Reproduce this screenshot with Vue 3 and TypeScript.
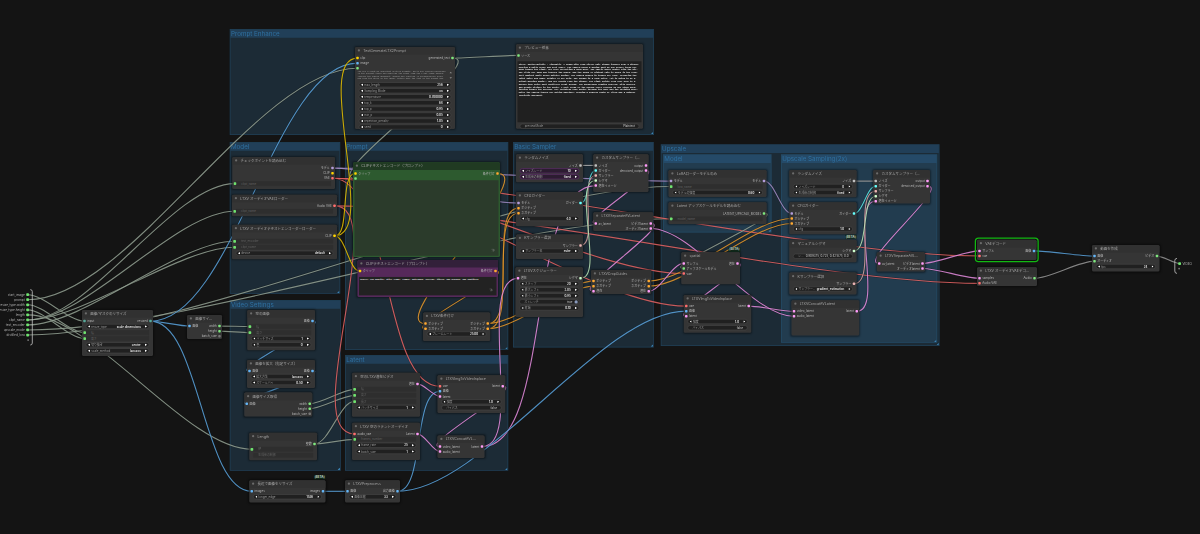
<script setup lang="ts">
type Slot = [label: string, kind: string]
interface Widget {
  name: string
  value?: string
  linked?: boolean
  bare?: boolean
  plain?: boolean
  toggle?: boolean
  seed?: boolean
}
interface Note {
  lines: string[]
  height: number
  lift: number
  look: string
}
interface GraphNode {
  id: string
  title: string
  box: [number, number, number, number]
  ins?: Slot[]
  outs?: Slot[]
  widgets?: Widget[]
  note?: Note
  tone?: string
  beta?: boolean
  selected?: boolean
}

const ZOOM = 4
const TITLE = 7.6
const ROW = 5.05
const PITCH = 6.05

const colors: Record<string, string> = {
  image: '#64b5f6', clip: '#ffd500', vae: '#ff6e6e', latent: '#ff9cf9', model: '#b39ddb',
  cond: '#ffa931', text: '#7fe87f', any: '#57a99a', noise: '#c0c0c0', guider: '#66ffff',
  sampler: '#ecb4b4', sigmas: '#cdffcd', grey: '#777777', wire: '#a3b3a3', audio: '#a8a8a8',
}

const groups = [
  { title: 'Prompt Enhance', box: [229.7, 29, 654, 135] },
  { title: 'Model', box: [229.7, 142, 340.3, 293.7] },
  { title: 'Prompt', box: [345, 142, 508.3, 350] },
  { title: 'Basic Sampler', box: [513, 142, 653.8, 347.6] },
  { title: 'Upscale', box: [660.8, 144.2, 939.6, 346] },
  { title: 'Model', box: [663, 154.3, 771.6, 232.6] },
  { title: 'Upscale Sampling(2x)', box: [781, 154.3, 937.3, 342.7] },
  { title: 'Video Settings', box: [229.7, 300, 340.7, 470.7] },
  { title: 'Latent', box: [345, 355, 508.3, 470.7] },
]

const num = (name: string, value: string): Widget => ({ name, value })
const linked = (name: string): Widget => ({ name, linked: true })
const pos: Slot = ['ポジティブ', 'cond']
const neg: Slot = ['ネガティブ', 'cond']
const samplerIns: Slot[] = [['ノイズ', 'noise'], ['ガイダー', 'guider'], ['サンプラー', 'sampler'], ['シグマ', 'sigmas'], ['潜在イメージ', 'latent']]
const samplerOuts: Slot[] = [['output', 'latent'], ['denoised_output', 'latent']]
const separateOuts: Slot[] = [['ビデオlatent', 'latent'], ['オーディオlatent', 'latent']]
const concatIns: Slot[] = [['video_latent', 'latent'], ['audio_latent', 'latent']]
const inplaceIns: Slot[] = [['vae', 'vae'], ['画像', 'image'], ['latent', 'latent']]
const inplaceWidgets: Widget[] = [num('強度', '1.0'), { name: 'バイパス', value: 'false', plain: true }]

const systemLines = [
  'You are a creative assistant writing prompts. Write one flowing paragraph',
  'in the present tense and describe the scene from the first frame onward,',
  'include the camera movement, sounds and lighting in chronological order',
  'and keep the style of the image. Return only the text of the prompt now.',
]
const previewLines = [
  'Style: photorealistic - cinematic. A woman with long silver hair stands indoors near a window,',
  'wearing a white dress and soft scarf. The camera holds a medium shot as she slowly turns her',
  'head toward the light, her eyes reflecting a warm glow. The fabric moves gently with the air.',
  'She lifts her hand and touches the glass, and the sound of distant rain is heard in the room.',
  'Soft ambient music plays quietly behind. The camera pushes in toward her face, revealing the',
  'faint smile and small details of her skin. She speaks in a calm voice, "It is going to be a',
  'bright morning again," and her breath fogs the window. The light shifts from cool blue to a',
  'golden tone while dust particles float around. The background remains blurred, with shelves',
  'and plants visible in the depth. A soft creak of the wooden floor follows as she steps back,',
  'turning toward the doorway. Her footsteps echo gently through the hall and the curtains move,',
  'while the camera tracks her motion smoothly, keeping a shallow depth of field and a natural',
  'realistic movement.',
]

const nodes: GraphNode[] = [
  { id: 'resize', title: '画像/マスクのリサイズ', box: [82, 310, 153, 356], ins: [['input', 'any']], outs: [['resized', 'any']],
    widgets: [num('resize_type', 'scale dimensions'), linked('幅'), linked('高さ'), num('切り抜き', 'center'), num('scale_method', 'lanczos')] },
  { id: 'size', title: '画像サイ…', box: [187, 315, 222, 339], ins: [['画像', 'image']], outs: [['width', 'text'], ['height', 'text'], ['batch_size', 'grey']] },
  { id: 'gen', title: 'TextGenerateLTX2Prompt', box: [355, 47, 455, 129], ins: [['clip', 'clip'], ['image', 'image'], ['', 'text']], outs: [['generated_text', 'text']],
    note: { lines: systemLines, height: 11.5, lift: 1.4, look: 'bare' },
    widgets: [num('max_length', '256'), num('Sampling Mode', 'on'), num('temperature', '0.700000'), num('top_k', '64'), num('top_p', '0.95'), num('min_p', '0.05'), num('repetition_penalty', '1.05'), num('seed', '0')] },
  { id: 'preview', title: 'プレビュー任意', box: [516, 44.3, 643, 128.7], ins: [['ソース', 'text']],
    note: { lines: previewLines, height: 61, lift: -3.4, look: 'bright' },
    widgets: [{ name: 'previewMode', value: 'Plaintext', plain: true }] },
  { id: 'ckpt', title: 'チェックポイントを読み込む', box: [232.3, 157, 335, 189], outs: [['モデル', 'model'], ['CLIP', 'clip'], ['VAE', 'vae']], widgets: [linked('ckpt_name')] },
  { id: 'avae', title: 'LTXV オーディオVAEローダー', box: [232, 194.7, 337, 216.3], outs: [['Audio VAE', 'vae']], widgets: [linked('ckpt_name')] },
  { id: 'tenc', title: 'LTXV オーディオテキストエンコーダーローダー', box: [232, 224.7, 337, 259.3], outs: [['CLIP', 'clip']], widgets: [linked('text_encoder'), linked('ckpt_name'), num('device', 'default')] },
  { id: 'green', title: 'CLIPテキストエンコード（プロンプト）', box: [353, 162.3, 500, 257], tone: 'green', ins: [['クリップ', 'clip'], ['', 'text']], outs: [['条件付け', 'cond']],
    note: { lines: [], height: 75.5, lift: 0.8, look: 'moss' } },
  { id: 'purple', title: 'CLIPテキストエンコード（プロンプト）', box: [357.5, 260, 498, 297], tone: 'purple', ins: [['クリップ', 'clip']], outs: [['条件付け', 'cond']],
    note: { lines: ['blurry, low quality, still frame, frames, watermark, overlay, titles, has blurbox, has subtitles'], height: 18.6, lift: -3.2, look: 'dark' } },
  { id: 'cond', title: 'LTXV条件付け', box: [423, 312.5, 490.3, 341], ins: [pos, neg], outs: [pos, neg], widgets: [num('フレームレート', '25.00')] },
  { id: 'noise', title: 'ランダムノイズ', box: [516, 154.3, 583, 182.3], outs: [['ノイズ', 'noise']], widgets: [{ name: 'ノイズシード', value: '10', seed: true }, { name: '生成後の制御', value: 'fixed', seed: true }] },
  { id: 'cfg', title: 'CFGガイダー', box: [516, 192, 583, 226.3], ins: [['モデル', 'model'], pos, neg], outs: [['ガイダー', 'guider']], widgets: [num('cfg', '4.0')] },
  { id: 'ks', title: 'Kサンプラー選択', box: [516, 234.5, 583, 259], outs: [['サンプラー', 'sampler']], widgets: [num('サンプラー名', 'euler')] },
  { id: 'sched', title: 'LTXVスケジューラー', box: [515.6, 267.2, 583, 317], ins: [['潜在', 'latent']], outs: [['シグマ', 'sigmas']],
    widgets: [num('ステップ', '20'), num('最大シフト', '2.05'), num('最小シフト', '0.95'), { name: 'ストレッチ', value: 'true', toggle: true }, num('終端', '0.10')] },
  { id: 'cs', title: 'カスタムサンプラー（…', box: [593.3, 154.3, 648.6, 192], ins: samplerIns, outs: samplerOuts },
  { id: 'sep', title: 'LTXVSeparateAVLatent', box: [593.3, 212.3, 653.3, 231], ins: [['av_latent', 'latent']], outs: separateOuts },
  { id: 'crop', title: 'LTXVCropGuides', box: [591, 270, 651.2, 294], ins: [pos, neg, ['潜在', 'latent']], outs: [pos, neg, ['潜在', 'latent']] },
  { id: 'lora', title: 'LoRAローダーモデルのみ', box: [668.6, 170, 766.6, 197], ins: [['モデル', 'model']], outs: [['モデル', 'model']], widgets: [linked('lora_name'), num('モデルの強度', '0.60')] },
  { id: 'upm', title: 'Latent アップスケールモデルを読み込む', box: [668.6, 202.3, 766.6, 224], outs: [['LATENT_UPSCALE_MODEL', 'text']], widgets: [linked('model_name')] },
  { id: 'spatial', title: 'spatial', box: [681.3, 252.3, 740, 284.2], beta: true, ins: [['サンプル', 'latent'], ['アップスケールモデル', 'text'], ['vae', 'vae']], outs: [['潜在', 'latent']] },
  { id: 'inp2', title: 'LTXVImgToVideoInplace', box: [683.7, 295, 751.3, 332.7], ins: inplaceIns, outs: [['latent', 'latent']], widgets: inplaceWidgets },
  { id: 'noise2', title: 'ランダムノイズ', box: [789.3, 170, 856.5, 197.3], outs: [['ノイズ', 'noise']], widgets: [num('ノイズシード', '0'), num('生成後の制御', 'fixed')] },
  { id: 'cfg2', title: 'CFGガイダー', box: [789.3, 202.3, 856.5, 234.3], ins: [['モデル', 'model'], pos, neg], outs: [['ガイダー', 'guider']], widgets: [num('cfg', '1.0')] },
  { id: 'manual', title: 'マニュアルシグマ', box: [789.3, 239.8, 856.5, 262.2], beta: true, outs: [['シグマ', 'sigmas']], widgets: [{ name: 'シ…', value: '0.909375, 0.725, 0.421875, 0.0', plain: true }] },
  { id: 'ks2', title: 'Kサンプラー選択', box: [789.3, 272.6, 856.5, 294.6], outs: [['サンプラー', 'sampler']], widgets: [num('サンプラー…', 'gradient_estimation')] },
  { id: 'cat2', title: 'LTXVConcatAVLatent', box: [791.4, 300.2, 859.2, 335.4], ins: concatIns, outs: [['latent', 'latent']] },
  { id: 'cs2', title: 'カスタムサンプラー（…', box: [873.3, 170, 930, 203.6], ins: samplerIns, outs: samplerOuts },
  { id: 'sep2', title: 'LTXVSeparateAVL…', box: [876.8, 252.3, 925, 271.6], ins: [['av_latent', 'latent']], outs: separateOuts },
  { id: 'empty', title: '空の画像', box: [247.3, 310, 315, 350.3], outs: [['画像', 'image']], widgets: [linked('幅'), linked('高さ'), num('バッチサイズ', '1'), num('色', '0')] },
  { id: 'scale', title: '画像を拡大（指定サイズ）', box: [247, 360, 315, 388], ins: [['画像', 'image']], outs: [['画像', 'image']], widgets: [num('拡大方法', 'lanczos'), num('スケールバイ', '0.50')] },
  { id: 'getsize', title: '画像サイズ取得', box: [244.3, 392.6, 312.2, 416.4], ins: [['画像', 'image']], outs: [['width', 'text'], ['height', 'text'], ['batch_size', 'grey']] },
  { id: 'length', title: 'Length', box: [249.3, 432.8, 317, 460.2], outs: [['整数', 'text']], widgets: [linked('値'), { name: '生成後の制御', linked: true, bare: true }] },
  { id: 'evid', title: '空のLTXV潜在ビデオ', box: [352, 372.8, 420, 416.7], outs: [['潜在', 'latent']], widgets: [linked('幅'), linked('高さ'), linked('長さ'), num('バッチサイズ', '1')] },
  { id: 'eaud', title: 'LTXV 空のラテントオーディオ', box: [352, 422.8, 420, 460], ins: [['audio_vae', 'vae']], outs: [['Latent', 'latent']], widgets: [linked('frames_number'), num('frame_rate', '25'), num('batch_size', '1')] },
  { id: 'inp', title: 'LTXVImgToVideoInplace', box: [437.4, 375.2, 505.2, 413], ins: inplaceIns, outs: [['latent', 'latent']], widgets: inplaceWidgets },
  { id: 'cat', title: 'LTXVConcatAVL…', box: [437.4, 435.4, 484.6, 458], ins: concatIns, outs: [['latent', 'latent']] },
  { id: 'pre', title: 'LTXVPreprocess', box: [345, 480.2, 400, 502.6], ins: [['画像', 'image']], outs: [['出力画像', 'image']], widgets: [num('画像圧縮', '33')] },
  { id: 'edge', title: '長辺で画像をリサイズ', box: [249.3, 480.2, 325.4, 502.6], beta: true, ins: [['images', 'image']], outs: [['images', 'image']], widgets: [num('longer_edge', '1536')] },
  { id: 'dec', title: 'VAEデコード', box: [977, 239.8, 1036.6, 260], selected: true, ins: [['サンプル', 'latent'], ['vae', 'vae']], outs: [['画像', 'image']] },
  { id: 'adec', title: 'LTXV オーディオVAEデコ…', box: [977, 267.2, 1037, 286], ins: [['samples', 'latent'], ['Audio VAE', 'vae']], outs: [['Audio', 'text']] },
  { id: 'video', title: '動画を作成', box: [1092, 245, 1159.6, 271.6], ins: [['画像', 'image'], ['オーディオ', 'text']], outs: [['ビデオ', 'text']], widgets: [num('fps', '24')] },
]

const panelInputs = ['start_image', 'prompt', 'resize_type.width', 'resize_type.height', 'length', 'ckpt_name', 'text_encoder', 'upscale_mode', 'distilled_lora', '']

const byId = new Map(nodes.map((n) => [n.id, n]))

// A reference is "node:side+index"; sides are i (input), o (output), w (widget input)
function anchor(reference: string): [number, number] {
  const [id, socket] = reference.split(':')
  const side = socket[0]
  const index = Number(socket.slice(1))
  if (id === 'panel') return [27.8, 294.7 + index * 5.04]
  if (id === 'result') return [1179.6, 263.5]
  const node = byId.get(id)!
  const [x, y, right] = node.box
  const rows = Math.max(node.ins?.length ?? 0, node.outs?.length ?? 0)
  if (side === 'w') return [x + 2.4, y + TITLE + rows * ROW + 3.85 + index * PITCH]
  return [side === 'i' ? x + 2.4 : right - 2.4, y + TITLE + 3.5 + index * ROW]
}

const wires: [string, string, string][] = [
  ['panel:o0', 'resize:i0', 'wire'], ['panel:o1', 'gen:i2', 'wire'], ['panel:o2', 'resize:w1', 'wire'], ['panel:o3', 'resize:w2', 'wire'],
  ['panel:o4', 'length:w0', 'wire'], ['panel:o5', 'ckpt:w0', 'wire'], ['panel:o5', 'avae:w0', 'wire'], ['panel:o5', 'tenc:w1', 'wire'],
  ['panel:o6', 'tenc:w0', 'wire'], ['panel:o7', 'upm:w0', 'wire'], ['panel:o8', 'lora:w0', 'wire'],
  ['resize:o0', 'gen:i1', 'image'], ['resize:o0', 'size:i0', 'image'], ['resize:o0', 'edge:i0', 'image'],
  ['size:o0', 'empty:w0', 'wire'], ['size:o1', 'empty:w1', 'wire'], ['empty:o0', 'scale:i0', 'image'], ['scale:o0', 'getsize:i0', 'image'],
  ['getsize:o0', 'evid:w0', 'wire'], ['getsize:o1', 'evid:w1', 'wire'], ['length:o0', 'evid:w2', 'wire'], ['length:o0', 'eaud:w0', 'wire'],
  ['gen:o0', 'preview:i0', 'wire'], ['gen:o0', 'green:i1', 'wire'],
  ['ckpt:o0', 'lora:i0', 'model'], ['ckpt:o0', 'cfg:i0', 'model'],
  ['ckpt:o2', 'inp:i0', 'vae'], ['ckpt:o2', 'spatial:i2', 'vae'], ['ckpt:o2', 'inp2:i0', 'vae'], ['ckpt:o2', 'dec:i1', 'vae'],
  ['avae:o0', 'eaud:i0', 'vae'], ['avae:o0', 'adec:i1', 'vae'],
  ['tenc:o0', 'gen:i0', 'clip'], ['tenc:o0', 'green:i0', 'clip'], ['tenc:o0', 'purple:i0', 'clip'],
  ['green:o0', 'cond:i0', 'cond'], ['purple:o0', 'cond:i1', 'cond'],
  ['cond:o0', 'cfg:i1', 'cond'], ['cond:o1', 'cfg:i2', 'cond'], ['cond:o0', 'crop:i0', 'cond'], ['cond:o1', 'crop:i1', 'cond'],
  ['crop:o0', 'cfg2:i1', 'cond'], ['crop:o1', 'cfg2:i2', 'cond'], ['crop:o2', 'spatial:i0', 'latent'],
  ['noise:o0', 'cs:i0', 'noise'], ['cfg:o0', 'cs:i1', 'guider'], ['ks:o0', 'cs:i2', 'sampler'], ['sched:o0', 'cs:i3', 'sigmas'],
  ['cat:o0', 'cs:i4', 'latent'], ['cat:o0', 'sched:i0', 'latent'], ['cs:o1', 'sep:i0', 'latent'],
  ['sep:o0', 'crop:i2', 'latent'], ['sep:o1', 'cat2:i1', 'latent'], ['spatial:o0', 'inp2:i2', 'latent'], ['inp2:o0', 'cat2:i0', 'latent'],
  ['cat2:o0', 'cs2:i4', 'latent'], ['upm:o0', 'spatial:i1', 'wire'], ['lora:o0', 'cfg2:i0', 'model'],
  ['noise2:o0', 'cs2:i0', 'noise'], ['cfg2:o0', 'cs2:i1', 'guider'], ['ks2:o0', 'cs2:i2', 'sampler'], ['manual:o0', 'cs2:i3', 'sigmas'],
  ['cs2:o1', 'sep2:i0', 'latent'], ['sep2:o0', 'dec:i0', 'latent'], ['sep2:o1', 'adec:i0', 'latent'],
  ['dec:o0', 'video:i0', 'image'], ['adec:o0', 'video:i1', 'audio'], ['video:o0', 'result:i0', 'audio'],
  ['edge:o0', 'pre:i0', 'image'], ['pre:o0', 'inp:i1', 'image'], ['pre:o0', 'inp2:i1', 'image'],
  ['evid:o0', 'inp:i2', 'latent'], ['eaud:o0', 'cat:i1', 'latent'], ['inp:o0', 'cat:i0', 'latent'],
]

const paths = wires.map(([from, to, kind]) => {
  const [ax, ay] = anchor(from)
  const [bx, by] = anchor(to)
  const pull = Math.hypot(bx - ax, by - ay) * 0.25
  return { d: `M${ax} ${ay}C${ax + pull} ${ay} ${bx - pull} ${by} ${bx} ${by}`, color: colors[kind] }
})

function place(box: number[]) {
  return {
    left: `${box[0] * ZOOM}px`,
    top: `${box[1] * ZOOM}px`,
    width: `${(box[2] - box[0]) * ZOOM}px`,
    height: `${(box[3] - box[1]) * ZOOM}px`,
  }
}

function slotRows(node: GraphNode) {
  const count = Math.max(node.ins?.length ?? 0, node.outs?.length ?? 0)
  return Array.from({ length: count }, (_, i) => ({ input: node.ins?.[i], output: node.outs?.[i] }))
}
</script>

<template>
  <main class="viewport">
    <div class="world">
      <section v-for="(group, g) in groups" :key="g" class="group" :style="place(group.box)">
        <h2>{{ group.title }}</h2>
        <i class="grip"></i>
      </section>

      <svg class="wires" viewBox="0 0 1200 534">
        <template v-for="(path, p) in paths" :key="p">
          <path :d="path.d" class="shade" />
          <path :d="path.d" class="wire" :stroke="path.color" />
        </template>
        <path class="bracket" d="M30.3 289.6q2 0 2 2V343q0 2-2 2" />
        <path class="bracket" d="M1177 258.4q-2.2 0-2.2 2.2V271q0 2.4 2.2 2.4" />
      </svg>

      <ul class="panel inputs">
        <li v-for="(label, i) in panelInputs" :key="i"><span>{{ label }}</span><b :class="{ off: !label }"></b></li>
      </ul>
      <ul class="panel result">
        <li><b></b><span>VIDEO</span></li>
        <li><b class="off"></b></li>
      </ul>

      <article v-for="node in nodes" :key="node.id" class="node" :class="[node.tone, { selected: node.selected }]" :style="place(node.box)">
        <em v-if="node.beta" class="beta">[BETA]</em>
        <header><i></i><span>{{ node.title }}</span></header>
        <div class="slots">
          <div v-for="(row, r) in slotRows(node)" :key="r" class="row">
            <span v-if="row.input" class="slot"><b :style="{ background: colors[row.input[1]] }"></b>{{ row.input[0] }}</span>
            <span v-if="row.output" class="slot out">{{ row.output[0] }}<b :style="{ background: colors[row.output[1]] }"></b></span>
          </div>
        </div>
        <div v-if="node.note" class="note" :class="node.note.look" :style="{ height: `${node.note.height * ZOOM}px`, marginTop: `${-node.note.lift * ZOOM + 4}px` }">
          <div class="lines"><p v-for="(line, l) in node.note.lines" :key="l">{{ line }}</p></div>
          <svg v-if="node.tone" class="resize" viewBox="0 0 16 16"><path d="M2 4h9v8M5 12l8-8M8 14l6-6" /></svg>
          <svg v-if="node.note.look === 'bare'" class="scroll" viewBox="0 0 12 40"><path d="M1 13l5-6 5 6zM1 29l5 6 5-6z" /></svg>
        </div>
        <div class="widgets">
          <div v-for="(w, i) in node.widgets" :key="i" class="widget" :class="{ linked: w.linked, plain: w.plain || w.toggle, seed: w.seed }">
            <b v-if="w.linked && !w.bare" class="plug"></b>
            <i v-if="!w.linked && !w.plain && !w.toggle" class="arrow left"></i>
            <span class="name">{{ w.name }}</span>
            <span class="value">{{ w.value }}</span>
            <i v-if="w.toggle" class="knob"></i>
            <i v-else-if="!w.linked && !w.plain" class="arrow"></i>
          </div>
        </div>
      </article>
    </div>
  </main>
</template>

<style>
body { background: #141414; }
</style>

<style scoped>
.viewport { width: 1200px; height: 534px; overflow: hidden; background: #141414; font-family: Inter, "Noto Sans CJK JP", sans-serif; }
.world { position: relative; width: 4800px; height: 2136px; transform: scale(0.25); transform-origin: 0 0; }
.group { position: absolute; box-sizing: border-box; background: rgba(50, 108, 146, 0.27); border: 3px solid rgba(38, 94, 136, 0.4); }
.group h2 { margin: 0; height: 32px; padding-left: 2px; background: rgba(42, 106, 160, 0.32); color: #2f70a0; font-size: 25px; font-weight: 400; line-height: 31px; white-space: nowrap; }
.grip { position: absolute; right: 0; bottom: 0; width: 10px; height: 10px; background: #3b83b4; clip-path: polygon(100% 0, 100% 100%, 0 100%); }
.wires { position: absolute; left: 0; top: 0; width: 4800px; height: 2136px; fill: none; }
.shade { stroke: #0a0a0a; stroke-opacity: 0.35; stroke-width: 1.9; }
.wire { stroke-width: 1.15; stroke-opacity: 0.76; }
.bracket { stroke: #c4c4c4; stroke-width: 0.8; }
.panel { position: absolute; margin: 0; padding: 0; list-style: none; color: #b0b0b0; font-size: 12.3px; }
.panel li { display: flex; align-items: center; height: 20.16px; gap: 6px; white-space: nowrap; }
.panel b { width: 11px; height: 11px; border-radius: 3px; background: #6fe36f; }
.panel b.off { width: 7px; height: 7px; background: #777; }
.inputs { left: -40px; top: 1168.7px; width: 156px; }
.inputs li { justify-content: flex-end; }
.result { left: 4713px; top: 1044px; }
.node { position: absolute; display: flex; flex-direction: column; border-radius: 6px; background: #353535; box-shadow: 0 0 8px 3px rgba(0, 0, 0, 0.4); color: #b4b4b4; font-size: 12px; }
.node header { display: flex; align-items: center; flex: none; gap: 13px; height: 30.4px; padding-left: 11px; border-radius: 6px 6px 0 0; background: #313131; color: #a6a6a6; font-size: 14px; white-space: nowrap; }
.node header span { margin-top: -4px; }
.node header i { flex: none; width: 9px; height: 9px; margin-top: -3px; border-radius: 50%; background: #6c6c6c; }
.slots { flex: none; padding-top: 4px; margin-bottom: -4px; }
.row { display: flex; align-items: center; height: 20.2px; padding: 0 5px; }
.slot { display: flex; align-items: center; gap: 6px; line-height: 20px; white-space: nowrap; }
.slot.out { margin-left: auto; }
.slot b { width: 10px; height: 10px; border-radius: 3px; }
.widgets { display: flex; flex-direction: column; gap: 4.2px; padding: 5.4px 15px 0; }
.widget { position: relative; display: flex; align-items: center; box-sizing: border-box; height: 20px; padding: 0 7px; border: 2px solid #4c4c4c; border-radius: 10px; background: #202020; color: #989898; font-size: 11.5px; line-height: 16px; white-space: nowrap; }
.name { margin-left: 5px; }
.value { margin-left: auto; margin-right: 17px; color: #ececec; font-weight: 600; }
.arrow { flex: none; width: 8px; height: 10px; background: #fff; clip-path: polygon(0 0, 100% 50%, 0 100%); }
.arrow.left { clip-path: polygon(100% 0, 0 50%, 100% 100%); }
.linked { border-color: #303030; border-radius: 3px; background: #2e2e2e; color: #606060; padding-left: 14px; }
.plug { position: absolute; left: -12px; top: 3px; width: 11px; height: 11px; border-radius: 3px; background: #6fe36f; }
.plain .name { margin-left: 11px; }
.plain .value { margin-right: 8px; color: #bbb; font-weight: 500; }
.knob { width: 13px; height: 13px; border-radius: 50%; background: #8899bb; margin-right: -3px; }
.seed { background: #2c1c31; border-color: #682e78; }
.beta { position: absolute; right: 0; top: -21px; height: 17px; padding: 0 3px; background: #0f2618; color: #e5f2e8; font-size: 12px; font-style: normal; font-weight: 600; line-height: 17px; }
.note { position: relative; flex: none; box-sizing: border-box; margin: 0 6px; padding: 5px; font-family: "DejaVu Sans Mono", "Liberation Mono", monospace; font-size: 10px; }
.note p { margin: 0; line-height: 11.4px; white-space: pre; }
.note.bare { margin: 0 8px; padding: 2px; font-size: 8px; color: #a0a0a0; }
.note.bare p { line-height: 10.2px; }
.bright { background: #202020; color: #f2f2f2; font-size: 8.5px; font-weight: 700; }
.moss { background: #2b3b2b; }
.dark { background: #222; color: #f0f0f0; font-size: 8.2px; font-weight: 700; }
.resize { position: absolute; right: 14px; bottom: 14px; width: 16px; height: 16px; fill: none; stroke: #8a8a8a; stroke-width: 1.5; }
.scroll { position: absolute; right: 3px; top: 3px; width: 12px; height: 40px; fill: #8c8c8c; }
.green { background: #2d5a2f; }
.green header { background: #203a22; }
.purple { background: #56295a; }
.purple header { background: #33203a; }
.selected { outline: 5px solid #12b812; outline-offset: 4px; }
</style>
